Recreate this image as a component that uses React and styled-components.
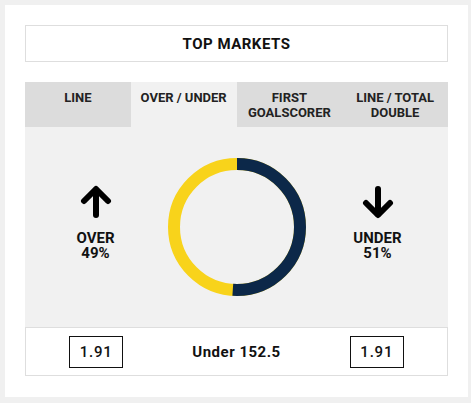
import styled, { createGlobalStyle } from 'styled-components';

const GlobalStyle = createGlobalStyle`
    body {
        margin: 0;
        background: #f0f0f0;
        font-family: Roboto, "Liberation Sans", sans-serif;
        color: #111;
    }
`;

const tabs = ['LINE', 'OVER / UNDER', 'FIRST GOALSCORER', 'LINE / TOTAL DOUBLE'];

function Arrow({ down }) {
    return (
        <svg width="34" height="34" viewBox="0 0 34 34" style={{ transform: down ? 'rotate(180deg)' : 'none' }}>
            <g fill="none" stroke="#000" strokeWidth="6" strokeLinecap="round" strokeLinejoin="round">
                <path d="M17 5V30" />
                <path d="M5 16L17 4L29 16" />
            </g>
        </svg>
    );
}

function Donut({ over }) {
    const r = 63;
    const c = 2 * Math.PI * r;
    const under = c * (1 - over / 100);
    return (
        <svg width="138" height="138" viewBox="0 0 138 138">
            <circle cx="69" cy="69" r={r} fill="none" stroke="#f8d31b" strokeWidth="12" />
            <circle
                cx="69" cy="69" r={r} fill="none" stroke="#0c2849" strokeWidth="12"
                strokeDasharray={`${under} ${c}`}
                transform="rotate(-90 69 69)"
            />
        </svg>
    );
}

function App() {
    const active = 'OVER / UNDER';

    return (
        <>
            <GlobalStyle />
            <Card>
                <Header>TOP MARKETS</Header>

                <Tabs>
                    {tabs.map((t) => (
                        <Tab key={t} active={t === active}>{t}</Tab>
                    ))}
                </Tabs>

                <Panel>
                    <Side>
                        <Arrow />
                        <Label>OVER<br />49%</Label>
                    </Side>
                    <Donut over={49} />
                    <Side>
                        <Arrow down />
                        <Label>UNDER<br />51%</Label>
                    </Side>
                </Panel>

                <Odds>
                    <Price>1.91</Price>
                    <LineText>Under 152.5</LineText>
                    <Price>1.91</Price>
                </Odds>
            </Card>
        </>
    );
}

const Card = styled.div`
    margin: 5px 3px 6px 5px;
    background: white;
    padding: 20px 20px 21px;
`;

const Header = styled.div`
    height: 35px;
    border: 1px solid #dedede;
    display: flex;
    align-items: center;
    justify-content: center;
    font-size: 15px;
    letter-spacing: 0.5px;
    font-weight: 700;
    color: #111;
    margin-bottom: 20px;
`;

const Tabs = styled.div`
    display: grid;
    grid-template-columns: repeat(4, 1fr);
`;

const Tab = styled.div`
    height: 45px;
    box-sizing: border-box;
    padding: 8px 4px 0;
    background: ${(p) => (p.active ? '#f1f1f1' : '#dcdcdc')};
    text-align: center;
    font-size: 13px;
    line-height: 15px;
    font-weight: 700;
    color: #222;
`;

const Panel = styled.div`
    height: 200px;
    background: #f1f1f1;
    display: grid;
    grid-template-columns: 1fr 1fr 1fr;
    align-items: center;
    justify-items: center;
`;

const Side = styled.div`
    display: flex;
    flex-direction: column;
    align-items: center;
    gap: 12px;
    margin-top: -8px;
`;

const Label = styled.div`
    text-align: center;
    font-size: 15px;
    line-height: 15px;
    font-weight: 700;
    color: #111;
`;

const Odds = styled.div`
    height: 47px;
    border: 1px solid #dedede;
    display: grid;
    grid-template-columns: 1fr 1fr 1fr;
    align-items: center;
    justify-items: center;
`;

const Price = styled.div`
    width: 52px;
    height: 30px;
    border: 1px solid #111;
    display: flex;
    align-items: center;
    justify-content: center;
    font-size: 15px;
    font-weight: 500;
    letter-spacing: 0.8px;
`;

const LineText = styled.div`
    font-size: 15px;
    letter-spacing: 0.5px;
    font-weight: 700;
`;

export default App;
